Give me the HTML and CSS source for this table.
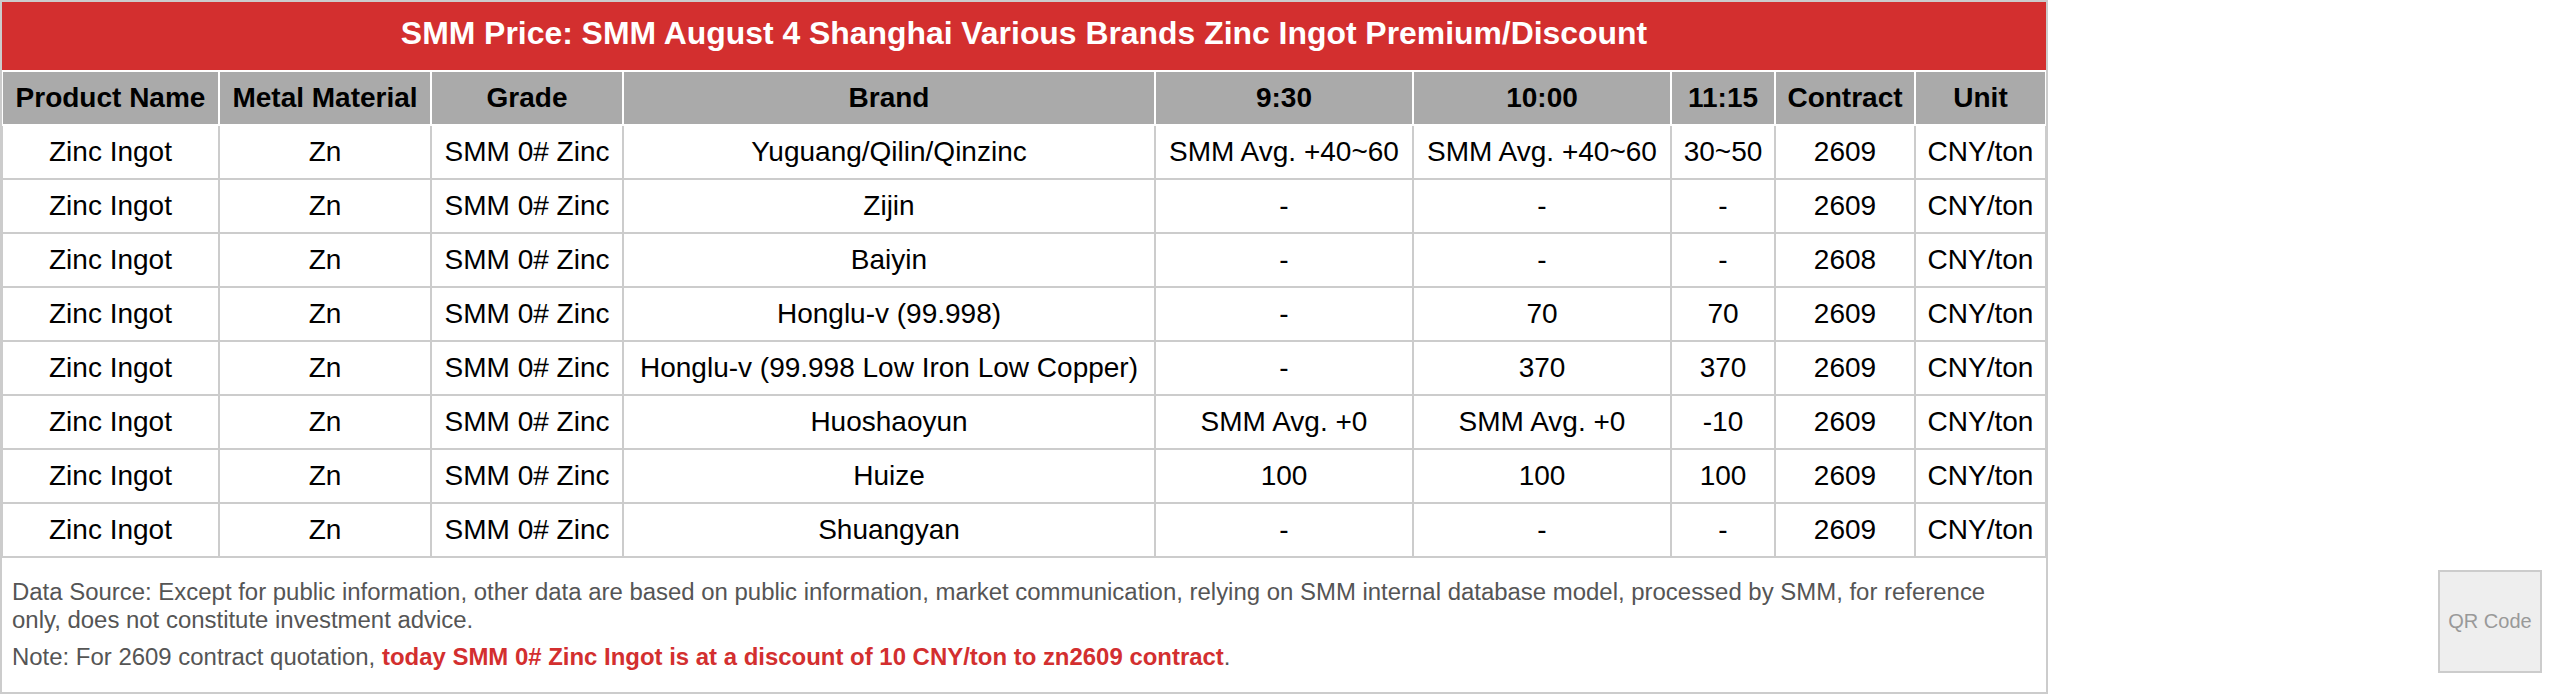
FILE: index.html
```html
<!DOCTYPE html>
<html lang="en">
<head>
<meta charset="utf-8">
<title>SMM Zinc Ingot Premium/Discount</title>
<link rel="stylesheet" href="styles.css">
</head>
<body>
<div class="page">
  <div class="sheet">
    <div class="title">SMM Price: SMM August 4 Shanghai Various Brands Zinc Ingot Premium/Discount</div>
    <table class="prices">
      <thead>
        <tr>
          <th class="c1">Product Name</th>
          <th class="c2">Metal Material</th>
          <th class="c3">Grade</th>
          <th class="c4">Brand</th>
          <th class="c5">9:30</th>
          <th class="c6">10:00</th>
          <th class="c7">11:15</th>
          <th class="c8">Contract</th>
          <th class="c9">Unit</th>
        </tr>
      </thead>
      <tbody>
        <tr><td>Zinc Ingot</td><td>Zn</td><td>SMM 0# Zinc</td><td>Yuguang/Qilin/Qinzinc</td><td>SMM Avg. +40~60</td><td>SMM Avg. +40~60</td><td>30~50</td><td>2609</td><td>CNY/ton</td></tr>
        <tr><td>Zinc Ingot</td><td>Zn</td><td>SMM 0# Zinc</td><td>Zijin</td><td>-</td><td>-</td><td>-</td><td>2609</td><td>CNY/ton</td></tr>
        <tr><td>Zinc Ingot</td><td>Zn</td><td>SMM 0# Zinc</td><td>Baiyin</td><td>-</td><td>-</td><td>-</td><td>2608</td><td>CNY/ton</td></tr>
        <tr><td>Zinc Ingot</td><td>Zn</td><td>SMM 0# Zinc</td><td>Honglu-v (99.998)</td><td>-</td><td>70</td><td>70</td><td>2609</td><td>CNY/ton</td></tr>
        <tr><td>Zinc Ingot</td><td>Zn</td><td>SMM 0# Zinc</td><td>Honglu-v (99.998 Low Iron Low Copper)</td><td>-</td><td>370</td><td>370</td><td>2609</td><td>CNY/ton</td></tr>
        <tr><td>Zinc Ingot</td><td>Zn</td><td>SMM 0# Zinc</td><td>Huoshaoyun</td><td>SMM Avg. +0</td><td>SMM Avg. +0</td><td>-10</td><td>2609</td><td>CNY/ton</td></tr>
        <tr><td>Zinc Ingot</td><td>Zn</td><td>SMM 0# Zinc</td><td>Huize</td><td>100</td><td>100</td><td>100</td><td>2609</td><td>CNY/ton</td></tr>
        <tr><td>Zinc Ingot</td><td>Zn</td><td>SMM 0# Zinc</td><td>Shuangyan</td><td>-</td><td>-</td><td>-</td><td>2609</td><td>CNY/ton</td></tr>
      </tbody>
    </table>
    <div class="notes">
      <p>Data Source: Except for public information, other data are based on public information, market communication, relying on SMM internal database model, processed by SMM, for reference only, does not constitute investment advice.</p>
      <p>Note: For 2609 contract quotation, <strong class="hl">today SMM 0# Zinc Ingot is at a discount of 10 CNY/ton to zn2609 contract</strong>.</p>
    </div>
  </div>
  <div class="qr">QR Code</div>
</div>
</body>
</html>
```

FILE: styles.css
```css
* { box-sizing: border-box; }

html, body {
  margin: 0;
  padding: 0;
  background: #fff;
}

body {
  font-family: "Liberation Sans", Arial, sans-serif;
  color: #000;
}

.page {
  display: flex;
  align-items: flex-start;
  width: 2562px;
}

.sheet {
  width: 2048px;
  flex: none;
  border: 2px solid #ccc;
  background: #fff;
}

.title {
  background: #d32f2f;
  color: #fff;
  font-weight: bold;
  font-size: 31.9px;
  line-height: 38px;
  padding: 12px 0 18px;
  text-align: center;
  white-space: nowrap;
}

.prices {
  width: 2044px;
  table-layout: fixed;
  border-collapse: separate;
  border-spacing: 0;
  font-size: 28px;
}

.prices th,
.prices td {
  padding: 0;
  line-height: 52px;
  text-align: center;
  white-space: nowrap;
  overflow: hidden;
}

.prices th {
  background: #aaa;
  color: #000;
  font-weight: bold;
  border-top: 2px solid #fff;
  border-right: 2px solid #fff;
  border-bottom: 2px solid #fff;
}

.prices th:first-child { border-left: 1px solid #fff; }
.prices th:last-child { border-right-width: 1px; }

.prices td {
  color: #000;
  border-right: 2px solid #ccc;
  border-bottom: 2px solid #ccc;
}

.prices td:first-child { border-left: 1px solid #ccc; }
.prices td:last-child { border-right-width: 1px; }

.c1 { width: 218px; }
.c2 { width: 212px; }
.c3 { width: 192px; }
.c4 { width: 532px; }
.c5 { width: 258px; }
.c6 { width: 258px; }
.c7 { width: 104px; }
.c8 { width: 140px; }
.c9 { width: 130px; }

.notes {
  padding: 10px 10px 11px;
  font-size: 23.95px;
  line-height: 27.7px;
  color: #555;
}

.notes p {
  margin: 10px 0;
}

.hl {
  color: #d32f2f;
  font-weight: bold;
}

.qr {
  flex: none;
  margin-left: auto;
  margin-right: 20px;
  margin-top: 570px;
  width: 104px;
  height: 103px;
  border: 2px solid #ccc;
  background: #eee;
  color: #999;
  font-size: 20px;
  display: flex;
  align-items: center;
  justify-content: center;
  white-space: nowrap;
}
```
